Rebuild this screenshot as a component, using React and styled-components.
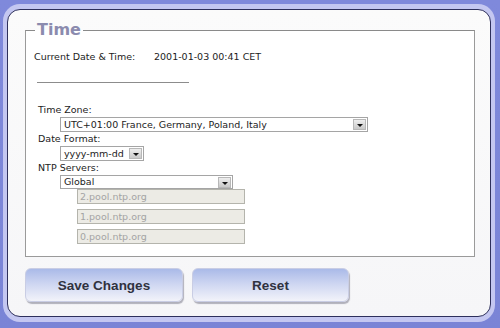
import React from "react";
import styled, { createGlobalStyle } from "styled-components";

const GlobalStyle = createGlobalStyle`
  html, body {
    margin: 0;
    padding: 0;
    background: #7d87d9;
  }
`;

const servers = ["2.pool.ntp.org", "1.pool.ntp.org", "0.pool.ntp.org"];

const App = () => {
  return (
    <>
      <GlobalStyle />
      <Screen>
        <Frame>
          <Panel>
            <Fieldset>
              <Legend>Time</Legend>
              <InfoRow>
                <InfoLabel>Current Date &amp; Time:</InfoLabel>
                <span>2001-01-03 00:41 CET</span>
              </InfoRow>
              <Rule />
              <FieldLabel $top={20}>Time Zone:</FieldLabel>
              <Select $width={308}>
                <SelectText>UTC+01:00 France, Germany, Poland, Italy</SelectText>
                <DropButton />
              </Select>
              <FieldLabel>Date Format:</FieldLabel>
              <Select $width={84}>
                <SelectText>yyyy-mm-dd</SelectText>
                <DropButton />
              </Select>
              <FieldLabel>NTP Servers:</FieldLabel>
              <Select $width={173} $height={14}>
                <SelectText>Global</SelectText>
                <DropButton />
              </Select>
              <ServerList>
                {servers.map((s) => (
                  <ServerInput key={s} value={s} disabled readOnly />
                ))}
              </ServerList>
            </Fieldset>
            <ButtonRow>
              <Button $width={158}>Save Changes</Button>
              <Button $width={157}>Reset</Button>
            </ButtonRow>
          </Panel>
        </Frame>
      </Screen>
    </>
  );
};

export default App;

const Screen = styled.div`
  width: 500px;
  height: 328px;
  box-sizing: border-box;
  padding: 4px 5px 6px 3px;
  display: flex;
  background: linear-gradient(180deg, #7f89db 0%, #7a84d6 100%);
  font-family: "DejaVu Sans", Verdana, sans-serif;
`;

const Frame = styled.div`
  flex: 1;
  display: flex;
  padding: 5px 4px 5px 4px;
  border-radius: 17px;
  background: #c4c7f1;
`;

const Panel = styled.div`
  flex: 1;
  display: flex;
  flex-direction: column;
  padding: 10px 15px 0 17px;
  border: 1px solid #2e305c;
  border-radius: 13px;
  background: linear-gradient(180deg, #fbfbfb 0%, #f6f6f8 100%);
`;

const Fieldset = styled.fieldset`
  margin: 0;
  padding: 0 0 12px 0;
  border: 1px solid #9a9a9a;
  border-top-color: #8a8a8a;
  background: #ffffff;
  display: flex;
  flex-direction: column;
  align-items: flex-start;
  font-size: 9.5px;
  color: #1c1c1c;
`;

const Legend = styled.legend`
  margin-left: 9px;
  padding: 0 2px;
  font-size: 16px;
  line-height: 20px;
  font-weight: bold;
  color: #8b8bae;
`;

const InfoRow = styled.div`
  display: flex;
  margin: 10px 0 0 8px;
  line-height: 14px;
`;

const InfoLabel = styled.span`
  width: 120px;
`;

const Rule = styled.div`
  margin: 18px 0 0 11px;
  width: 152px;
  height: 1px;
  background: #8c8c8c;
`;

const FieldLabel = styled.div`
  margin: ${(p) => p.$top || 0}px 0 0 12px;
  line-height: 14px;
`;

const Select = styled.div`
  margin-left: 34px;
  width: ${(p) => p.$width}px;
  height: ${(p) => p.$height || 15}px;
  box-sizing: border-box;
  display: flex;
  align-items: center;
  justify-content: space-between;
  padding: 0 1px 0 3px;
  border: 1px solid #a5a5a5;
  background: #fff;
`;

const SelectText = styled.span`
  line-height: 12px;
  white-space: nowrap;
`;

const DropButton = styled.span`
  width: 13px;
  height: 11px;
  box-sizing: border-box;
  border: 1px solid #b8b8b8;
  background: linear-gradient(180deg, #eeeeee 0%, #c9c9c9 100%);
  display: flex;
  align-items: center;
  justify-content: center;
  &::after {
    content: "";
    margin-top: 2px;
    border-left: 3px solid transparent;
    border-right: 3px solid transparent;
    border-top: 3px solid #111;
  }
`;

const ServerList = styled.div`
  margin-left: 51px;
  display: flex;
  flex-direction: column;
  gap: 5px;
`;

const ServerInput = styled.input`
  width: 168px;
  height: 15px;
  box-sizing: border-box;
  margin: 0;
  padding: 0 2px;
  border: 1px solid #b4b4ac;
  background: #ecebe5;
  font-family: "DejaVu Sans", Verdana, sans-serif;
  font-size: 9.5px;
  color: #a4a4a4;
  &:disabled {
    color: #a4a4a4;
    -webkit-text-fill-color: #a4a4a4;
  }
`;

const ButtonRow = styled.div`
  display: flex;
  gap: 9px;
  margin-top: 11px;
`;

const Button = styled.button`
  width: ${(p) => p.$width}px;
  height: 34px;
  padding: 0;
  border: 1px solid #c9cde4;
  border-radius: 6px;
  background: linear-gradient(180deg, #aabae8 0%, #cdd5f1 45%, #f2f3fa 100%);
  box-shadow: 1px 2px 1px rgba(90, 90, 110, 0.45);
  font-family: "Liberation Sans", Arial, sans-serif;
  font-size: 13.5px;
  font-weight: bold;
  color: #30323f;
  cursor: pointer;
`;
